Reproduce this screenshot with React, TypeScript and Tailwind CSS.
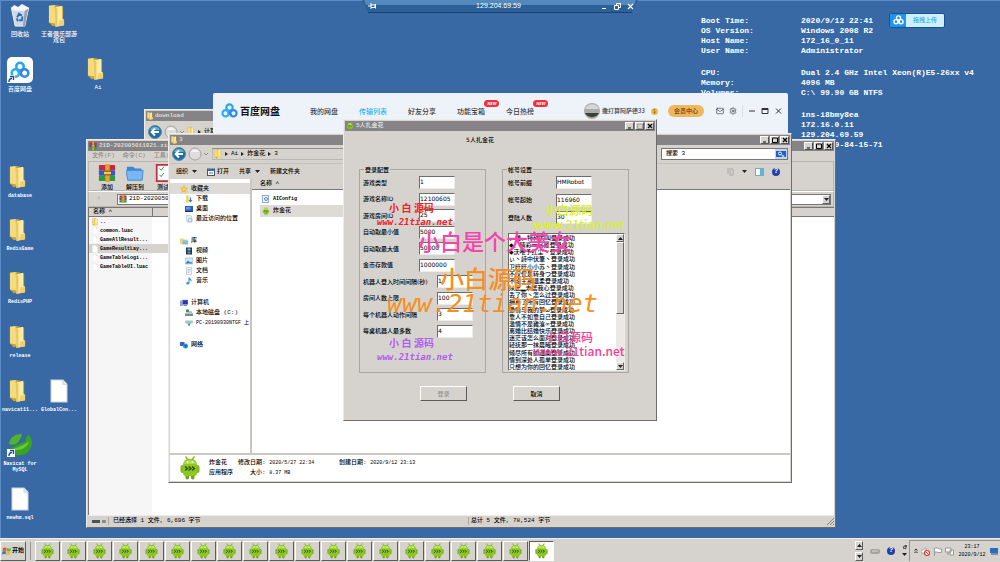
import type { ReactNode } from "react";
import clsx from "clsx";
import { Mail, Settings } from "lucide-react";

const SANS = "font-['DejaVu_Sans','Noto_Sans_CJK_SC',sans-serif]";
const MONO = "font-['Liberation_Mono','Noto_Sans_CJK_SC',monospace]";

const SYSTEM_INFO = [
  [
    ["Boot Time:", "2020/9/12 22:41"],
    ["OS Version:", "Windows 2008 R2"],
    ["Host Name:", "172_16_0_11"],
    ["User Name:", "Administrator"],
  ],
  [
    ["CPU:", "Dual 2.4 GHz Intel Xeon(R)E5-26xx v4"],
    ["Memory:", "4096 MB"],
    ["Volumes:", "C:\\ 99.90 GB NTFS"],
  ],
  [
    ["Machine:", "ins-i8bmy8ea"],
    ["IP Address:", "172.16.0.11"],
    ["", "129.204.69.59"],
    ["MAC Address:", "52-54-00-84-15-71"],
  ],
];

const LOGIN_FIELDS = [
  { id: "game-type", label: "游戏类型", value: "1" },
  { id: "game-id", label: "游戏名称ID", value: "12100605" },
  { id: "room-id", label: "游戏房间ID", value: "25" },
  { id: "min-gold", label: "自动取最小值", value: "5000" },
  { id: "max-gold", label: "自动取最大值", value: "50000" },
  { id: "deposit", label: "金币存款值", value: "1000000" },
  { id: "interval", label: "机器人登入时间间隔(秒)", value: "1", wide: true },
  { id: "room-limit", label: "房间人数上限", value: "100", wide: true },
  { id: "robot-action", label: "每个机器人动作间隔", value: "3", wide: true },
  { id: "table-robots", label: "每桌机器人最多数", value: "4", wide: true },
];

const ACCOUNT_FIELDS = [
  { id: "prefix", label: "帐号前缀", value: "HMRobot" },
  { id: "start", label: "帐号起始", value: "116960" },
  { id: "count", label: "登陆人数", value: "30" },
];

const LOG_NAMES = [
  "、舞、特种的叫",
  "◆、精彩一旦败",
  "◆沃唯予红尘丶",
  "ぃ丶詩中伏筆丶",
  "ㄗ旺旺小小苏丶",
  "不仅仅是转身つ",
  "不论主那温柔",
  "从此▂未居我心",
  "丢了你丶怎么过",
  "拥有了所有回忆",
  "爱情与我的梦ω",
  "靠人不如靠自己",
  "滥情不是雞湌∞",
  "离婚比结婚快乐",
  "迷茫该怎么面对",
  "轻抚那一抹晨曦",
  "倾尽所有的温柔",
  "情到深处人孤单",
  "只想为你的回忆",
];

const ARCHIVE_FILES = ["common.luac", "GameAllResult...", "GameResultLay...", "GameTableLogi...", "GameTableUI.luac"];

const NAV_GROUPS = [
  { title: "收藏夹", icon: "star", items: [["下载", "download"], ["桌面", "desktop"], ["最近访问的位置", "recent"]] },
  { title: "库", icon: "library", items: [["视频", "video"], ["图片", "picture"], ["文档", "doc"], ["音乐", "music"]] },
  { title: "计算机", icon: "computer", items: [["本地磁盘 (C:)", "disk"], ["PC-20190930NTGF 上", "netdisk"]] },
  { title: "网络", icon: "network", items: [] },
];

/* ---------- Icons ---------- */

function Folder({ className }: { className?: string }) {
  return (
    <svg viewBox="0 0 18 26" preserveAspectRatio="none" className={className} aria-hidden="true">
      <path d="M1 2 L8 1 L16 3 L16 22 L5 24 L1 20 Z" fill="#c9a23c" />
      <path d="M1 2 L7 1 L8 21 L1 20 Z" fill="#f4dc7e" />
      <path d="M7 4 L15 2 L15 16 L17 17 L17 23 L8 25 Z" fill="#fbeba4" />
      <path d="M7 4 L10 5 L10 24 L8 25 Z" fill="#e8c860" />
      <path d="M12 18 L17 17 L17 23 L11 24 Z" fill="#f0d070" />
    </svg>
  );
}

function FileSheet({ className }: { className?: string }) {
  return (
    <svg viewBox="0 0 18 23" preserveAspectRatio="none" className={className} aria-hidden="true">
      <path d="M1 1 H13 L17 5 V22 H1 Z" fill="#fff" stroke="#ccd3dc" />
      <path d="M13 1 V5 H17" fill="#e6eaf0" stroke="#ccd3dc" />
    </svg>
  );
}

function Android({ className }: { className?: string }) {
  return (
    <svg viewBox="0 0 20 24" className={className} aria-hidden="true">
      <path d="M6 1 L8 4 M14 1 L12 4" stroke="#8fc31f" strokeWidth="1.600" strokeLinecap="round" />
      <rect x="5.500" y="17" width="3.500" height="6.500" rx="1.700" fill="#6fa51c" />
      <rect x="11" y="17" width="3.500" height="6.500" rx="1.700" fill="#6fa51c" />
      <rect x="0.500" y="9" width="4" height="8" rx="2" fill="#7fb822" />
      <rect x="15.500" y="9" width="4" height="8" rx="2" fill="#7fb822" />
      <path d="M3 9 C3 0.500 17 0.500 17 9 V17 Q17 20 14 20 H6 Q3 20 3 17 Z" fill="#8cc722" />
      <path d="M4 8 C5 2.500 15 2.500 16 8 Z" fill="#aedc50" />
      <circle cx="7.500" cy="6" r="0.900" fill="#f4ffe0" />
      <circle cx="12.500" cy="6" r="0.900" fill="#f4ffe0" />
      <path d="M5 10.500 L7.500 12.500 L5 14.500 M8.500 10.500 L11 12.500 L8.500 14.500 M12 10.500 L14.500 12.500 L12 14.500" fill="none" stroke="#2c4a0a" strokeWidth="1.400" />
    </svg>
  );
}

function CloudLogo({ className, mono }: { className?: string; mono?: boolean }) {
  return (
    <svg viewBox="0 0 24 22" className={className} fill="none" strokeWidth="3" aria-hidden="true">
      <circle cx="12" cy="6.500" r="4.500" stroke={mono ? "#fff" : "#2aa4f0"} />
      <path d="M9 11 L15 18 M15 11 L10 16" stroke={mono ? "#fff" : "#ee3f5c"} />
      <circle cx="6.500" cy="14.500" r="4.500" stroke={mono ? "#fff" : "#25b2f2"} />
      <circle cx="17.500" cy="14.500" r="4.500" stroke={mono ? "#fff" : "#2a8cf0"} />
    </svg>
  );
}

function RarBooks({ className }: { className?: string }) {
  return (
    <svg viewBox="0 0 20 20" className={className} aria-hidden="true">
      <rect x="1" y="1" width="18" height="6" rx="1" fill="#c8283c" />
      <rect x="1" y="7" width="18" height="6" rx="1" fill="#3558c8" />
      <rect x="1" y="13" width="18" height="6" rx="1" fill="#2f9a3c" />
      <rect x="8" y="0" width="5" height="20" fill="#e8a02c" />
      <rect x="6" y="8" width="9" height="4" rx="1" fill="#f3d14a" stroke="#6e3a10" />
    </svg>
  );
}

function Shortcut() {
  return (
    <svg viewBox="0 0 8 8" className="absolute bottom-0 left-0 size-2" aria-hidden="true">
      <rect width="8" height="8" fill="#fff" />
      <path d="M2 7 C2 4 3 3.500 5 3.500 M3 1.500 H6.500 V5" fill="none" stroke="#1d4b92" strokeWidth="1.400" />
    </svg>
  );
}

function RecycleBin({ className }: { className?: string }) {
  return (
    <svg viewBox="0 0 20 25" className={className} aria-hidden="true">
      <path d="M1 4 L5 23 H15 L19 4 Z" fill="#cfd9e2" stroke="#f5f9fc" />
      <path d="M1 4 L4 1 L8 3 L12 0 L16 2 L19 4 L16 7 L4 7 Z" fill="#f4f7fa" />
      <path d="M15 7 L13 23 H15 L18.500 5 Z" fill="#8fa1b1" />
      <path d="M7 14 L9 10 L12 12 M12.500 13 L12 17 H9 M8 18 L6.500 15" fill="none" stroke="#2c6fc6" strokeWidth="2" />
    </svg>
  );
}

function NavicatLogo({ className }: { className?: string }) {
  return (
    <svg viewBox="0 0 26 24" className={className} aria-hidden="true">
      <path d="M2 11 C3 4 8 1 15 1 C14 5 12 9 9 11 C7 12 4 12 2 11 Z" fill="#4fb528" />
      <path d="M19 8 C18 5 19 3 22 2 C25 6 26 11 24 14 C22 20 17 23 11 22 C7 22 4 20 3 16 C8 12 14 11 19 8 Z" fill="#37a51d" />
      <path d="M5 17 C10 14 17 13 22 8 C21 14 15 18 5 17 Z" fill="#6cc83c" />
    </svg>
  );
}

function SideIcon({ name }: { name: string }) {
  return (
    <svg viewBox="0 0 16 16" className="size-2 shrink-0" aria-hidden="true">
      {name === "star" && <path d="M8 1 L10 6 L15 6.500 L11 10 L12.500 15 L8 12 L3.500 15 L5 10 L1 6.500 L6 6 Z" fill="#fbd24d" stroke="#e09a1c" />}
      {name === "download" && (
        <>
          <path d="M2 1 H9 V15 H2 Z" fill="#f3d777" />
          <path d="M10 5 V10 H7 L11 15 L15 10 H12 V5 Z" fill="#2b7fd8" />
        </>
      )}
      {name === "desktop" && (
        <>
          <rect x="0" y="2" width="16" height="11" fill="#2a5cb4" />
          <rect x="2" y="4" width="9" height="5" fill="#5d9be8" />
          <rect x="0" y="12" width="16" height="2" fill="#183a7c" />
        </>
      )}
      {name === "recent" && (
        <>
          <path d="M2 1 H11 L14 4 V14 H4 Z" fill="#e8f0f8" stroke="#9fb4c8" />
          <circle cx="10" cy="10" r="4" fill="#d8ecfa" stroke="#5b93c5" />
        </>
      )}
      {name === "library" && (
        <>
          <path d="M0 3 H6 L8 5 H15 V14 H0 Z" fill="#f1d475" />
          <rect x="5" y="7" width="11" height="8" fill="#7cc0e0" />
        </>
      )}
      {name === "video" && (
        <>
          <rect x="2" y="1" width="12" height="14" fill="#28343f" />
          <rect x="5" y="3" width="6" height="4" fill="#6fb5e8" />
          <rect x="5" y="9" width="6" height="4" fill="#4f96d0" />
        </>
      )}
      {name === "picture" && (
        <>
          <rect x="0" y="2" width="16" height="12" fill="#d5eaf6" stroke="#6aa0c4" />
          <path d="M1 13 L6 7 L10 11 L12 9 L15 13 Z" fill="#2c86b8" />
        </>
      )}
      {name === "doc" && (
        <>
          <path d="M3 1 H13 V15 H3 Z" fill="#fff" stroke="#8ea6c0" />
          <path d="M5 5 H11 M5 8 H11 M5 11 H9" stroke="#4d7fc0" />
        </>
      )}
      {name === "music" && <path d="M7 1 V10 C2 9 1 15 5 15 C8 15 9 13 9 11 V6 C12 7 12 8 12 10 C15 6 11 5 9 1 Z" fill="#2693dc" />}
      {name === "computer" && (
        <>
          <rect x="0" y="3" width="5" height="11" fill="#9aa6b8" />
          <rect x="5" y="2" width="11" height="9" fill="#2638b8" stroke="#8e9bd0" />
          <rect x="7" y="12" width="7" height="2" fill="#7d8798" />
        </>
      )}
      {name === "disk" && (
        <>
          <rect x="0" y="9" width="16" height="5" fill="#7a8a92" />
          <path d="M2 9 L4 4 H13 L15 9 Z" fill="#b3c2c8" />
          <rect x="2" y="1" width="6" height="5" fill="#3c9a50" />
        </>
      )}
      {name === "netdisk" && (
        <>
          <rect x="0" y="3" width="16" height="6" rx="2" fill="#a9c4c8" />
          <path d="M5 9 H11 L8 15 Z" fill="#2c9c5c" />
        </>
      )}
      {name === "network" && (
        <>
          <rect x="0" y="2" width="9" height="8" fill="#3a5fd0" />
          <circle cx="11" cy="10" r="5" fill="#1f9bd0" />
          <path d="M9 7 L13 9 L11 13 Z" fill="#183c98" />
        </>
      )}
    </svg>
  );
}

function HelpDot() {
  return (
    <span className="flex size-2 shrink-0 items-center justify-center rounded-full bg-[#1f3fae] text-[7px] leading-none font-bold text-white">?</span>
  );
}

/* ---------- Shared window parts ---------- */

function WindowButtons({ dimMax }: { dimMax?: boolean }) {
  const box = "flex h-2 w-[9px] items-center justify-center border border-t-white border-l-white border-r-[#555] border-b-[#555] bg-[#d6d3ce]";
  return (
    <div className="ml-auto flex gap-[1px]">
      <button className={box} aria-label="Minimize">
        <svg viewBox="0 0 6 6" className="size-[6px]"><path d="M1 5 H4" stroke="#000" /></svg>
      </button>
      <button className={box} aria-label="Maximize">
        <svg viewBox="0 0 6 6" className="size-[6px]"><path d="M0.500 1 H5.500 V5.500 H0.500 Z" fill="none" stroke={dimMax ? "#a5a29c" : "#000"} /></svg>
      </button>
      <button className={box} aria-label="Close">
        <svg viewBox="0 0 6 6" className="size-[6px]"><path d="M1 1 L5 5 M5 1 L1 5" stroke="#000" strokeWidth="1.200" /></svg>
      </button>
    </div>
  );
}

type WindowProps = { title: string; icon: ReactNode; place: string; children?: ReactNode; dimMax?: boolean };

function ClassicWindow({ title, icon, place, children, dimMax }: WindowProps) {
  return (
    <section
      aria-label={title}
      className={clsx("absolute flex flex-col border border-t-[#eeece8] border-l-[#eeece8] border-r-[#6d6d6d] border-b-[#6d6d6d] bg-[#d6d3ce] p-[1px]", place)}
    >
      <header className="flex h-[10px] shrink-0 items-center gap-[2px] bg-[#858385] px-[1px] font-bold text-[#dddad5]">
        {icon}
        <span className="leading-[8px] whitespace-nowrap">{title}</span>
        <WindowButtons dimMax={dimMax} />
      </header>
      {children}
    </section>
  );
}

function NavArrows() {
  return (
    <div className="flex shrink-0 items-center gap-[2px]">
      <button aria-label="Back">
        <svg viewBox="0 0 14 14" className="size-[14px]">
          <circle cx="7" cy="7" r="6.500" fill="#1c6ea8" stroke="#6f8796" />
          <path d="M2 5 A5.500 5.500 0 0 1 12 5 Z" fill="#5fb2dc" />
          <path d="M11 7 H4 M7 3.500 L3.500 7 L7 10.500" fill="none" stroke="#fff" strokeWidth="1.800" />
        </svg>
      </button>
      <button aria-label="Forward">
        <svg viewBox="0 0 14 14" className="size-[14px]">
          <circle cx="7" cy="7" r="6" fill="#dedddb" stroke="#a3a3a3" />
          <path d="M3 5 A4.500 4.500 0 0 1 11 5 Z" fill="#f4f4f4" />
        </svg>
      </button>
      <svg viewBox="0 0 4 4" className="size-1"><path d="M0 1 L2 3 L4 1" fill="none" stroke="#8b8b8b" /></svg>
    </div>
  );
}

function Breadcrumb({ parts }: { parts: string[] }) {
  return (
    <div className="flex items-center gap-[3px]">
      <Folder className="h-[10px] w-2" />
      {parts.map((part) => (
        <span key={part} className="flex items-center gap-[3px]">
          <svg viewBox="0 0 3 4" className="h-1 w-[3px]" aria-hidden="true"><path d="M0 0 L3 2 L0 4 Z" fill="#222" /></svg>
          {part}
        </span>
      ))}
    </div>
  );
}

function Caret() {
  return (
    <svg viewBox="0 0 5 3" className="h-[3px] w-[5px] shrink-0" aria-hidden="true">
      <path d="M0 0 H5 L2.500 3 Z" fill="#222" />
    </svg>
  );
}

/* ---------- Desktop ---------- */

function DesktopIcon({ place, label, children }: { place: string; label: string; children: ReactNode }) {
  return (
    <a href="#" className={clsx("absolute flex w-10 flex-col items-center text-center text-white", place)}>
      {children}
      <span className="mt-1 leading-[6px] whitespace-pre">{label}</span>
    </a>
  );
}

function DesktopIcons() {
  const folder = "mr-[5px] h-6 w-[17px]";
  const file = "h-6 w-[18px]";
  return (
    <nav className={clsx("text-[6px]", MONO)} aria-label="Desktop">
      <DesktopIcon place="left-0 top-1" label="回收站"><RecycleBin className="h-6 w-5" /></DesktopIcon>
      <DesktopIcon place="left-[39px] top-1" label={"王者俱乐部游\n戏包"}><Folder className={folder} /></DesktopIcon>
      <DesktopIcon place="left-0 top-[57px]" label="百度网盘">
        <span className="relative flex size-[26px] items-center justify-center rounded-[5px] bg-white">
          <CloudLogo className="w-5" />
          <Shortcut />
        </span>
      </DesktopIcon>
      <DesktopIcon place="left-[78px] top-[57px]" label="Ai"><Folder className={folder} /></DesktopIcon>
      <div className="text-[5px] font-bold">
        <DesktopIcon place="left-0 top-[165px]" label="database"><Folder className={folder} /></DesktopIcon>
        <DesktopIcon place="left-0 top-[218px]" label="RedisGame"><Folder className={folder} /></DesktopIcon>
        <DesktopIcon place="left-0 top-[271px]" label="RedisPHP"><Folder className={folder} /></DesktopIcon>
        <DesktopIcon place="left-0 top-[325px]" label="release"><Folder className={folder} /></DesktopIcon>
        <DesktopIcon place="left-0 top-[379px]" label="navicat11..."><Folder className={folder} /></DesktopIcon>
        <DesktopIcon place="left-[39px] top-[379px]" label="GlobalCon..."><FileSheet className={file} /></DesktopIcon>
        <DesktopIcon place="left-0 top-[433px]" label={"Navicat for\nMySQL"}>
          <span className="relative">
            <NavicatLogo className="w-[26px]" />
            <Shortcut />
          </span>
        </DesktopIcon>
        <DesktopIcon place="left-0 top-[487px]" label="newhm.sql"><FileSheet className={file} /></DesktopIcon>
      </div>
    </nav>
  );
}

function SystemInfo() {
  return (
    <div className="absolute top-4 left-[701px] flex flex-col gap-3 font-['Liberation_Mono',monospace] text-[8px] leading-[10px] font-bold whitespace-pre text-white">
      {SYSTEM_INFO.map((group) => (
        <dl key={group[0][0]}>
          {group.map(([name, value]) => (
            <div key={value} className="flex">
              <dt className="w-[100px]">{name}</dt>
              <dd>{value}</dd>
            </div>
          ))}
        </dl>
      ))}
    </div>
  );
}

function RemoteBar() {
  return (
    <div className="absolute top-0 left-1/2 h-[13px] w-[276px] -translate-x-1/2 text-white">
      <svg viewBox="0 0 276 13" preserveAspectRatio="none" className="absolute inset-0 size-full" aria-hidden="true">
        <path d="M0 0 H276 L270 12 Q269 13 267 13 H9 Q7 13 6 12 Z" fill="#2b6098" />
        <path d="M2 0 H274 L272 5 H4 Z" fill="#5489bd" />
        <path d="M6 12.500 H270" stroke="#1b4370" />
      </svg>
      <div className="relative flex h-3 items-center pr-1 pl-[6px]">
        <svg viewBox="0 0 8 6" className="h-[6px] w-2"><path d="M0 3 H3 M3 0 V6 M3 2 H7 V4.500 H3 M7.500 1 V5.500" stroke="#fff" fill="none" /></svg>
        <span className="flex-1 pl-5 text-center font-['Liberation_Sans',sans-serif] text-[7px]">129.204.69.59</span>
        <div className="flex gap-[6px]">
          <svg viewBox="0 0 7 7" className="size-[7px]"><path d="M1 5.500 H5" stroke="#fff" /></svg>
          <svg viewBox="0 0 7 7" className="size-[7px]"><path d="M0.500 2.500 H4.500 V6.500 H0.500 Z M2.500 2 V0.500 H6.500 V4.500 H5" stroke="#fff" fill="none" /></svg>
          <svg viewBox="0 0 7 7" className="size-[7px]"><path d="M1 1 L6 6 M6 1 L1 6" stroke="#fff" strokeWidth="1.200" /></svg>
        </div>
      </div>
    </div>
  );
}

/* ---------- Windows ---------- */

function DownloadWindow() {
  return (
    <ClassicWindow title="download" icon={<Folder className="h-2 w-[6px]" />} place="left-[144px] top-[109px] h-24 w-[360px]">
      <div className="flex items-center gap-[3px] px-[2px] pt-1">
        <NavArrows />
        <Breadcrumb parts={["计算机"]} />
      </div>
    </ClassicWindow>
  );
}

function ArchiveWindow() {
  const tool = "flex w-7 flex-col items-center gap-[2px]";
  return (
    <ClassicWindow title="21D-202005011821.zip" icon={<RarBooks className="size-2" />} place="left-[86px] top-[139px] h-[389px] w-[750px]">
      <div className="flex h-[10px] shrink-0 items-center gap-2 px-1 text-[#8a8782]">
        <button>文件(F)</button>
        <button>命令(C)</button>
        <button>工具(S)</button>
      </div>
      <div className="flex h-[30px] shrink-0 items-start border border-[#bab7b1] px-1 pt-[2px]">
        <button className={tool}><RarBooks className="size-[18px]" />添加</button>
        <button className={tool}>
          <svg viewBox="0 0 20 20" className="size-[18px]" aria-hidden="true">
            <path d="M1 3 H8 L10 5 H17 V8 H1 Z" fill="#3a86d8" />
            <path d="M0 7 H19 L18 18 H2 Z" fill="#79b7f2" stroke="#3f86d0" />
          </svg>
          解压到
        </button>
        <button className={tool}>
          <svg viewBox="0 0 20 20" className="size-[18px]" aria-hidden="true">
            <rect x="3" y="1" width="14" height="18" fill="#fff" stroke="#c33146" strokeWidth="2" />
            <path d="M6 5 L8 7 L11 3 M6 12 L8 14 L11 10" fill="none" stroke="#2b7a48" />
          </svg>
          测试
        </button>
      </div>
      <div className="flex h-4 shrink-0 items-center border border-[#bab7b1] border-t-white pr-[2px] pl-2">
        <button aria-label="Up" className="w-5 text-left text-[#777]">↑</button>
        <div className="flex h-[11px] flex-1 items-center gap-[2px] border border-[#777] bg-white pl-[1px]">
          <RarBooks className="size-2" />
          <span>21D-202005011821.zip</span>
          <button aria-label="Drop down" className="ml-auto flex h-[9px] w-2 items-center justify-center border border-r-[#666] border-b-[#666] border-t-white border-l-white bg-[#d6d3ce]">
            <Caret />
          </button>
        </div>
      </div>
      <div className="flex min-h-0 flex-1 flex-col border-l border-[#777] bg-[linear-gradient(90deg,#f6f6f7_63px,#fff_63px)]">
        <div className="flex h-[10px] shrink-0 items-center border-y border-t-[#777] border-b-[#777] bg-[#d6d3ce]">
          <span className="flex h-full w-16 items-center border-r border-[#777] pl-1">名称 ˄</span>
        </div>
        <ul className="text-[5px] font-bold">
          <li className="flex h-[9px] items-center gap-[2px] pl-[3px]"><Folder className="h-2 w-[6px]" />..</li>
          {ARCHIVE_FILES.map((file) => (
            <li key={file} className={clsx("flex h-[9px] w-40 items-center gap-[2px] pl-[3px]", file === "GameResultLay..." && "bg-[#d6d3ce]")}>
              <FileSheet className="h-2 w-[6px]" />
              {file}
            </li>
          ))}
        </ul>
      </div>
      <footer className="flex h-[11px] shrink-0 items-center border-t border-[#eeece8]">
        <div className="flex w-5 items-center gap-[2px] pl-1">
          <span className="h-[3px] w-2 bg-[#4b5552]" />
          <span className="h-[3px] w-1 bg-[#8b8b8b]" />
        </div>
        <span className="flex-1 border-l border-[#aaa7a1] pl-1">已经选择 1 文件, 6,696 字节</span>
        <span className="flex-1 border-l border-[#aaa7a1] pl-[2px]">总计 5 文件, 78,524 字节</span>
        <svg viewBox="0 0 8 8" className="size-2"><path d="M1 8 L8 1 M4 8 L8 4 M7 8 L8 7" stroke="#87847f" /></svg>
      </footer>
    </ClassicWindow>
  );
}

function CloudDriveWindow() {
  const tab = "relative mr-[21px] shrink-0";
  const badge = "absolute -top-[7px] left-[27px] rounded-full bg-[#f0303c] px-[3px] text-[4px] leading-[7px] font-bold text-white italic";
  return (
    <section aria-label="百度网盘" className="absolute top-[93px] left-[213px] h-[200px] w-[575px] rounded-t-[2px] bg-[#eef3fa] font-['Noto_Sans_CJK_SC',sans-serif] text-[7px] text-[#3a3d42]">
      <header className="flex h-9 items-center pl-2">
        <CloudLogo className="w-[17px]" />
        <h1 className="ml-[2px] w-[70px] text-[10px] font-bold text-[#111]">百度网盘</h1>
        <nav className="flex flex-1 whitespace-nowrap">
          <a href="#" className={tab}>我的网盘</a>
          <a href="#" className={clsx(tab, "text-[#2ab0f2]")}>传输列表</a>
          <a href="#" className={tab}>好友分享</a>
          <a href="#" className={tab}>功能宝箱<span className={badge}>NEW</span></a>
          <a href="#" className={tab}>今日热榜<span className={badge}>NEW</span></a>
        </nav>
        <div className="flex shrink-0 items-center pr-[6px] whitespace-nowrap">
          <svg viewBox="0 0 16 16" className="size-4" aria-hidden="true">
            <circle cx="8" cy="8" r="8" fill="#a9acaa" />
            <path d="M1 6 A7.500 7.500 0 0 1 15 6 Z" fill="#d5d7d5" />
            <path d="M1 10 H15 A8 8 0 0 1 1 10 Z" fill="#3b4038" />
          </svg>
          <span className="ml-[2px] w-[49px] text-[6px]">撒打算阿萨德33</span>
          <span className="mr-[10px] flex size-[7px] items-center justify-center rounded-full bg-[#edbc4c] text-[5px] text-[#6d4300]">$</span>
          <button className="h-3 w-9 rounded-full bg-[#efb85c] text-[6px] font-medium text-[#5c3608]">会员中心</button>
          <Mail className="ml-3 size-[8px]" />
          <Settings className="ml-[5px] size-[8px]" />
          <span className="mx-[5px] h-3 w-px bg-[#d8dde5]" />
          <svg viewBox="0 0 34 8" className="h-2 w-[34px]" fill="none" stroke="#333" aria-hidden="true">
            <path d="M1 4 H7 M14 1.500 H20 V6.500 H14 Z M14 2.500 H20 M28 1.500 L33 6.500 M33 1.500 L28 6.500" />
          </svg>
        </div>
      </header>
    </section>
  );
}

function ExplorerWindow() {
  return (
    <ClassicWindow title="3" icon={<Folder className="h-2 w-[6px]" />} place="left-[168px] top-[133px] h-[350px] w-[624px]">
      <div className="flex h-[18px] shrink-0 items-center gap-1 px-[2px]">
        <NavArrows />
        <div className="flex h-3 flex-1 items-center justify-between border border-[#bbb8b2] border-t-[#8d8b87] pl-[1px]">
          <Breadcrumb parts={["Ai", "炸金花", "3"]} />
          <span className="h-2 w-1 bg-[#37a53c]" />
        </div>
        <div className="flex h-3 w-[127px] items-center border border-[#777] bg-white">
          <input aria-label="搜索" defaultValue="搜索 3" className="w-full min-w-0 bg-transparent pl-1 outline-none" />
          <button aria-label="Go" className="flex h-[10px] w-3 shrink-0 items-center justify-center bg-[#bcd8f6]">
            <svg viewBox="0 0 10 8" className="h-2 w-[10px]" aria-hidden="true">
              <rect y="1" width="10" height="6" fill="#2b57c8" />
              <circle cx="4" cy="3.500" r="1.500" fill="none" stroke="#fff" />
              <path d="M6 5 L8 7" stroke="#7fe0f8" strokeWidth="2" />
            </svg>
          </button>
        </div>
      </div>
      <div className="flex h-[16px] shrink-0 items-center gap-[10px] border-t border-[#c3c0ba] px-[6px]">
        <button className="flex items-center gap-1">组织<Caret /></button>
        <button className="flex items-center gap-[2px]">
          <svg viewBox="0 0 8 8" className="size-2" aria-hidden="true">
            <rect x="0.500" y="1" width="7" height="6.500" fill="#f4f8fc" stroke="#3d5878" />
            <rect x="1" y="1" width="6" height="2" fill="#3f69a8" />
            <path d="M2 5 H6" stroke="#777" />
          </svg>
          打开
        </button>
        <button className="flex items-center gap-1">共享<Caret /></button>
        <button>新建文件夹</button>
        <div className="ml-auto flex items-center gap-2 pr-1">
          <svg viewBox="0 0 8 8" className="size-2" aria-hidden="true"><path d="M1 1 H7 V7 H3 M1 3 H5 M1 5 H5" fill="none" stroke="#aaa" /></svg>
          <Caret />
          <svg viewBox="0 0 9 8" className="h-2 w-[9px]" aria-hidden="true">
            <rect x="0.500" y="0.500" width="8" height="7" fill="#fff" stroke="#7fa7bd" />
            <rect x="5" y="1" width="3" height="6" fill="#5cb8d8" />
          </svg>
          <HelpDot />
        </div>
      </div>
      <div className="flex min-h-0 flex-1 bg-white">
        <aside className="flex w-[82px] shrink-0 flex-col gap-[11px] overflow-hidden border-r-2 border-[#c9c6c1] pt-1 whitespace-nowrap">
          {NAV_GROUPS.map((group) => (
            <div key={group.title}>
              <h2 className={clsx("flex h-[11px] items-center gap-[3px] pl-[10px]", group.icon === "star" && "bg-[#dedbd7]")}>
                <SideIcon name={group.icon} />
                {group.title}
              </h2>
              <ul>
                {group.items.map(([label, icon]) => (
                  <li key={label} className={clsx("flex h-[10px] items-center gap-[3px] pl-[15px]", icon === "netdisk" && "text-[5px]")}>
                    <SideIcon name={icon} />
                    {label}
                  </li>
                ))}
              </ul>
            </div>
          ))}
        </aside>
        <div className="flex-1">
          <div className="flex h-[11px] items-center border-b border-[#777] bg-[#d6d3ce] pl-2">名称 ˄</div>
          <ul className="pt-[3px] pl-2">
            <li className="flex h-3 items-center gap-[3px] pl-[2px]">
              <svg viewBox="0 0 8 8" className="size-2" aria-hidden="true">
                <rect x="0.500" y="0.500" width="6" height="7" fill="#f4f8fc" stroke="#90a9c8" />
                <circle cx="4" cy="4" r="1.500" fill="none" stroke="#5b88c0" />
              </svg>
              <span className="text-[5px] font-bold">AIConfig</span>
            </li>
            <li className="flex h-3 w-[280px] items-center gap-[3px] bg-[#dedbd7] pl-[2px]">
              <Android className="size-2" />
              炸金花
            </li>
          </ul>
        </div>
      </div>
      <footer className="flex h-7 shrink-0 items-center gap-[9px] border-t-2 border-[#cbc8c3] bg-white pl-[10px] leading-[10px]">
        <Android className="h-6 w-5" />
        <div className="flex gap-[5px]">
          <div>炸金花<br />应用程序</div>
          <div className="w-[96px]">
            <p>修改日期: <span className="text-[5px]">2020/5/27 22:34</span></p>
            <p className="pl-3">大小: <span className="text-[5px]">8.37 MB</span></p>
          </div>
          <p>创建日期: <span className="text-[5px]">2020/9/12 23:13</span></p>
        </div>
      </footer>
    </ClassicWindow>
  );
}

type Field = { id: string; label: string; value: string; wide?: boolean };

function FieldRow({ field, offset }: { field: Field; offset: string }) {
  return (
    <div className="flex items-center">
      <label htmlFor={field.id} className={clsx("shrink-0 whitespace-nowrap", field.wide ? "w-[74px]" : offset)}>
        {field.label}
      </label>
      <input
        id={field.id}
        defaultValue={field.value}
        className="h-[13px] w-9 border border-t-[#6d6d6d] border-l-[#6d6d6d] border-r-[#eeece8] border-b-[#eeece8] bg-white pb-[2px] outline-none"
      />
    </div>
  );
}

function RobotDialog() {
  const group = "relative h-[204px] w-[127px] border border-[#aaa7a1] px-[3px]";
  const legend = "absolute -top-1 left-1 bg-[#d6d3ce] px-[1px] leading-[8px]";
  const button = "h-[15px] w-[47px] border border-t-white border-l-white border-r-[#5a5a5a] border-b-[#5a5a5a] bg-[#d6d3ce]";
  const arrow = "flex size-2 items-center justify-center border border-t-white border-l-white border-r-[#666] border-b-[#666] bg-[#d6d3ce]";
  return (
    <ClassicWindow title="5人扎金花" icon={<Android className="size-2" />} place="left-[343px] top-[119px] h-[302px] w-[314px]" dimMax>
      <div className={clsx("flex flex-1 flex-col items-center", SANS)}>
        <h2 className="pt-1 pr-10 leading-[10px]">5人扎金花</h2>
        <div className="mt-6 flex gap-4 pr-3">
          <div role="group" aria-labelledby="login-legend" className={group}>
            <span id="login-legend" className={legend}>登录配置</span>
            <div className="flex h-[168px] flex-col justify-between pt-[6px]">
              {LOGIN_FIELDS.map((field) => (
                <FieldRow key={field.id} field={field} offset="w-14" />
              ))}
            </div>
          </div>
          <div role="group" aria-labelledby="account-legend" className={group}>
            <span id="account-legend" className={legend}>帐号设置</span>
            <div className="flex h-[54px] flex-col justify-between pt-[6px] pl-[2px]">
              {ACCOUNT_FIELDS.map((field) => (
                <FieldRow key={field.id} field={field} offset="w-12" />
              ))}
            </div>
            <div className="mt-[9px] ml-[2px] flex h-[138px] w-[117px] border border-t-[#6d6d6d] border-l-[#6d6d6d] border-[#eeece8] bg-white">
              <ul className="flex flex-1 flex-col justify-between overflow-hidden">
                {LOG_NAMES.map((name) => (
                  <li key={name} className="leading-[7px] whitespace-nowrap">{name}登录成功</li>
                ))}
              </ul>
              <div className="flex w-2 flex-col bg-[#ebe9e5]">
                <button className={arrow} aria-label="Scroll up"><span className="rotate-180"><Caret /></span></button>
                <div className="h-[72px] border border-t-white border-l-white border-r-[#666] border-b-[#666] bg-[#d6d3ce]" />
                <button className={clsx(arrow, "mt-auto")} aria-label="Scroll down"><Caret /></button>
              </div>
            </div>
          </div>
        </div>
        <div className="mt-[13px] flex gap-[46px] pr-5">
          <button disabled className={clsx(button, "text-[#96938e]")}>登录</button>
          <button className={button}>取消</button>
        </div>
      </div>
    </ClassicWindow>
  );
}

/* Promotional stamps laid over the desktop */
function Stamps() {
  const brush = "absolute left-[389px] flex w-[60px] flex-col whitespace-pre font-bold text-[10px] leading-[14px]";
  const brushUrl = "-ml-3 font-['DejaVu_Sans_Mono',monospace] text-[9px] leading-[12px] italic";
  const round = "absolute left-[545px] flex flex-col font-['Noto_Sans_CJK_SC',sans-serif] text-[12px] leading-[14px] font-medium";
  return (
    <div className="pointer-events-none font-['Liberation_Serif','Noto_Sans_CJK_SC',serif]">
      <div className={clsx(brush, "top-[202px] text-[#f0202c]")}>
        小 白 源码<span className={brushUrl}>www.21tian.net</span>
      </div>
      <div className={clsx(brush, "top-[337px] text-[#b25cf0]")}>
        小 白 源码<span className={brushUrl}>www.21tian.net</span>
      </div>
      <div className={clsx(round, "top-[203px] text-[#d9f02a]")}>
        小白源码<span className="-ml-3">www.21tian.net</span>
      </div>
      <div className={clsx(round, "top-[330px] text-[#f53c96]")}>
        小白源码<span className="-ml-3">www.21tian.net</span>
      </div>
      <p className="absolute top-[230px] left-[418px] text-[22px] leading-[26px] font-medium whitespace-nowrap text-[#f545ab]">小白是个大美女</p>
      <p className="absolute top-[266px] left-[440px] text-[24px] leading-[28px] font-medium whitespace-nowrap text-[#f78f1e]">小白源码</p>
      <p className="absolute top-[290px] left-[387px] font-['DejaVu_Sans_Mono',monospace] text-[25px] leading-[28px] whitespace-nowrap text-[#f78f1e] italic">www.21tian.net</p>
    </div>
  );
}

function Taskbar() {
  const raised = "border border-t-white border-l-white border-r-[#5d5d5d] border-b-[#5d5d5d]";
  return (
    <footer className="relative flex h-6 shrink-0 items-center border-t border-[#eeece8] bg-[#d6d3ce]">
      <button className={clsx("flex h-5 w-[26px] items-center justify-center gap-[1px] font-bold", raised)}>
        <svg viewBox="0 0 9 8" className="h-2 w-[9px]" aria-hidden="true">
          <path d="M1 1 Q3 0 4.500 1 L4 4 Q2 3 0.500 4 Z" fill="#e5502a" />
          <path d="M5 1 Q7 2 9 1 L8.500 4 Q6 5 4.500 4 Z" fill="#6cb33c" />
          <path d="M0.500 4.500 Q2 3.500 4 4.500 L3.500 7.500 Q2 6.500 0 7.500 Z" fill="#3b74cc" />
          <path d="M4.500 4.500 Q6 5.500 8.500 4.500 L8 7.500 Q6 8.500 4 7.500 Z" fill="#f0bc2e" />
        </svg>
        开始
      </button>
      <span className="ml-[4px] h-[18px] w-[2px] border-l border-[#999]" />
      <div className="ml-[3px] flex gap-[1px]">
        {Array.from({ length: 20 }, (_, i) => (
          <button
            key={i}
            aria-label={`5人扎金花 ${i + 1}`}
            className={clsx("flex h-5 w-[25px] items-center justify-center", i === 19 ? "border border-t-[#5d5d5d] border-l-[#5d5d5d] border-white bg-white" : raised)}
          >
            <Android className="h-4 w-[13px]" />
          </button>
        ))}
      </div>
      <div className="ml-auto flex items-center gap-[7px]">
        <div className="flex flex-col gap-[2px]">
          <button aria-label="Scroll up" className={clsx("flex h-[9px] w-2 items-center justify-center", raised)}><span className="rotate-180"><Caret /></span></button>
          <button aria-label="Scroll down" className={clsx("flex h-[9px] w-2 items-center justify-center", raised)}><Caret /></button>
        </div>
        <svg viewBox="0 0 10 8" className="h-2 w-[10px]" aria-hidden="true"><rect y="2" width="10" height="5" rx="2" fill="#a5a3a0" /><path d="M2 4 H8" stroke="#d5d5d5" /></svg>
        <HelpDot />
        <span className="flex flex-col items-center gap-1">
          <svg viewBox="0 0 4 4" className="size-1"><path d="M0.500 1.500 H3 V3.500 H0.500 Z M1.500 0.500 H3.500 V2" fill="none" stroke="#222" strokeWidth="0.700" /></svg>
          <Caret />
        </span>
      </div>
      <div className="ml-[2px] flex h-[21px] items-center gap-[3px] border-t border-l border-[#97948f] pr-[2px] pl-1">
        <svg viewBox="0 0 4 6" className="h-[6px] w-1" aria-hidden="true"><path d="M0.500 2.500 L2 1 L3.500 2.500 M0.500 5 L2 3.500 L3.500 5" fill="none" stroke="#222" /></svg>
        <svg viewBox="0 0 9 9" className="size-[9px]" aria-hidden="true">
          <path d="M0 3 H2 L5 0.500 V8 L2 6 H0 Z" fill="#f5f5f5" stroke="#aaa" />
          <circle cx="6" cy="6" r="2.500" fill="#fff" stroke="#e03030" strokeWidth="1.200" />
          <path d="M4.500 4.500 L7.500 7.500" stroke="#e03030" />
        </svg>
        <svg viewBox="0 0 9 9" className="size-[9px]" aria-hidden="true"><path d="M1.500 9 V1 H5 L6 2 H8.500 V5.500 H5 L4 5 H1.500" fill="#fff" stroke="#8a8a8a" strokeWidth="0.800" /></svg>
        <svg viewBox="0 0 9 9" className="size-[9px]" aria-hidden="true"><path d="M0.500 1 H6 V5 H0.500 Z M3 5 V8 M5 3 H8.500 V8 H5 Z" fill="#f3f3f3" stroke="#8a8a8a" strokeWidth="0.800" /></svg>
        <time className="flex w-[30px] flex-col items-center text-[5px] leading-[8px]"><span>23:17</span><span>2020/9/12</span></time>
        <svg viewBox="0 0 8 8" className="size-2" aria-hidden="true"><rect y="1" width="8" height="5" fill="#2a6cc0" /><path d="M1 7 H8" stroke="#174a8c" /></svg>
      </div>
    </footer>
  );
}

export default function App() {
  return (
    <div className={clsx("flex h-screen flex-col overflow-hidden bg-[#3869a4] text-[6px] leading-[8px] font-medium text-black", MONO)}>
      <main className="relative min-h-0 flex-1 shadow-[inset_1px_1px_0_#5b8cc6]">
        <SystemInfo />
        <button className="absolute top-[13px] left-[889px] flex h-[15px] w-[56px] items-center rounded-[2px] border border-[#1c4f93] bg-[#cdf0fc] text-[6px] text-[#38a8dc]">
          <span className="flex h-full w-4 items-center justify-center bg-[#1f96ee]"><CloudLogo mono className="w-[11px]" /></span>
          <span className="flex-1 text-center">拖拽上传</span>
        </button>
        <DesktopIcons />
        <DownloadWindow />
        <ArchiveWindow />
        <CloudDriveWindow />
        <ExplorerWindow />
        <RobotDialog />
        <RemoteBar />
        <Stamps />
      </main>
      <Taskbar />
    </div>
  );
}
